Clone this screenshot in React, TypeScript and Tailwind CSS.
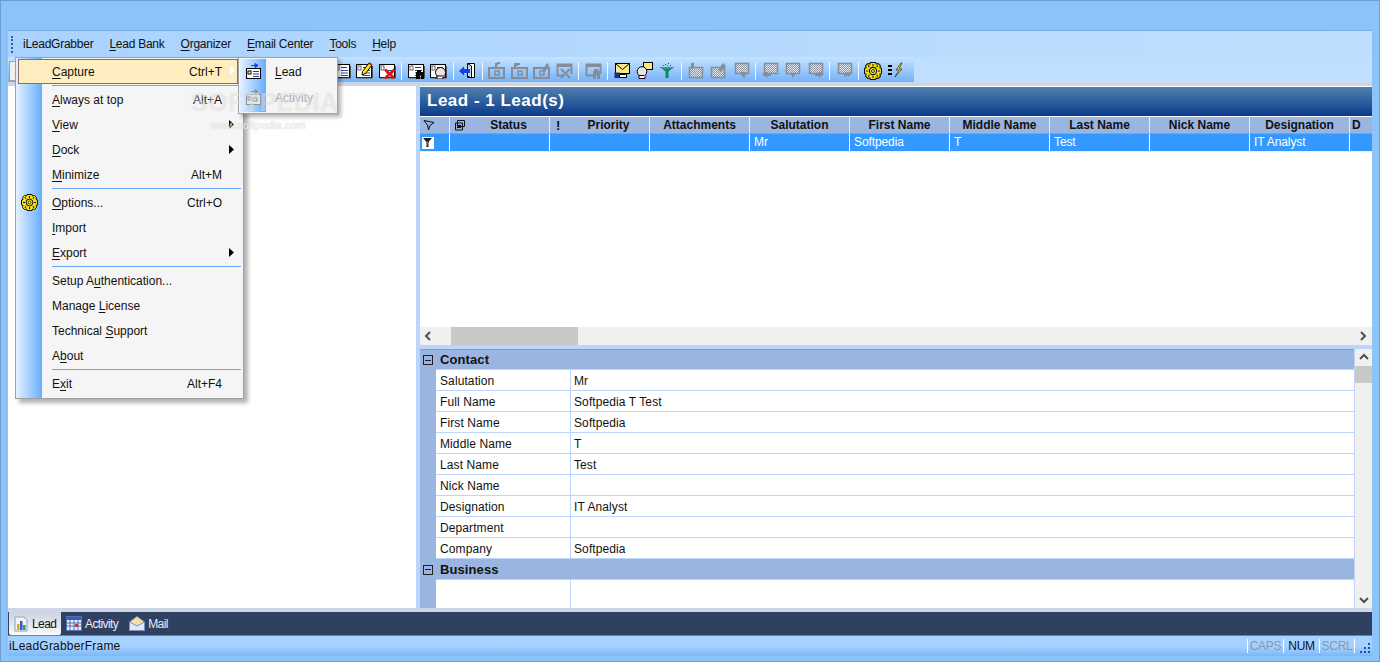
import React from "react";

const font = { fontFamily: '"Liberation Sans", Arial, sans-serif' };

type Ov = "none" | "list" | "pen" | "x" | "man" | "query";

const G = "#868d98";

function Dither() {
  return (
    <defs>
      <pattern id="dith" width="2" height="2" patternUnits="userSpaceOnUse">
        <rect width="2" height="2" fill="#8d949f" />
        <rect width="1" height="1" fill="#dfe8f2" />
        <rect x="1" y="1" width="1" height="1" fill="#dfe8f2" />
      </pattern>
    </defs>
  );
}

function Card({ ov = "none", gray = false, w = 17 }: { ov?: Ov; gray?: boolean; w?: number }) {
  const c = gray ? G : "#000";
  return (
    <svg width={w} height="17" viewBox="0 0 17 17">
      <rect x="0.5" y="2.5" width="15" height="13" fill={gray ? "#c5d5e6" : "#fff"} stroke={c} />
      <path d="M1 16h15.500V4" fill="none" stroke={gray ? G : "#555"} />
      <rect x="2" y="4" width="3" height="4" fill="#fff" stroke={gray ? G : "#666"} />
      {ov !== "x" && <path d="M7 5.500h6" stroke={gray ? G : "#1a3f8f"} />}
      <path d="M7 8.500h7M7 11h7M7 13.500h7" stroke={gray ? G : "#2b4f9f"} />
      {ov === "pen" && (
        <>
          <path d="M6 13 L6.500 9.500 L13 1 L16 3 L9.500 11.500 Z" fill="#ffe600" stroke="#000" />
          <path d="M13 1 L16 3" stroke="#d02020" strokeWidth="2" />
        </>
      )}
      {ov === "x" && <path d="M6 7.500 L15.500 16.500 M15.500 7.500 L6 16.500" stroke="#e80f0f" strokeWidth="2.600" />}
      {ov === "man" && <path d="M9 8h4v2h3v7h-3v-4h-1v4H8v-7h1z" fill={c} />}
      {ov === "query" && (
        <>
          <circle cx="10.500" cy="10.500" r="5" fill="#e6e6e6" stroke="#000" />
          <path d="M7 14h6v3H7z" fill="#fff" stroke="#000" />
          <rect x="12" y="13" width="3" height="2" fill="#c060b0" />
        </>
      )}
    </svg>
  );
}

function Gear({ size = 17 }: { size?: number }) {
  return (
    <svg width={size} height={size} viewBox="0 0 17 17">
      <path
        d="M6 .5h5l.5 1.500 2-.5 2 2-.5 2L16.500 6v5l-1.500.5.5 2-2 2-2-.5-.5 1.500H6l-.5-1.500-2 .5-2-2 .5-2L.5 11V6L2 5.500l-.5-2 2-2 2 .5z"
        fill="#f2e01c"
        stroke="#111"
      />
      <path d="M4 3l1 2M13 3l-1 2M2 8.500h2M13 8.500h2M4 14l1-2M13 14l-1-2M8.500 2v2M8.500 13v2" stroke="#111" />
      <circle cx="8.500" cy="8.500" r="3.400" fill="#f2e01c" stroke="#111" />
      <circle cx="8.500" cy="8.500" r="1.400" fill="#fff8a0" stroke="#111" strokeWidth="0.800" />
    </svg>
  );
}

function Exit() {
  return (
    <svg width="17" height="17" viewBox="0 0 17 17">
      <path d="M8.500 1.500h7v14h-7z" fill="#fff" stroke="#000" />
      <path d="M8.500 1.500l4 2.500v12l-4-2z" fill="#cfd6e4" stroke="#000" />
      <path d="M0 9l5-4.500V7h6v4H5v2.500z" fill="#1040e0" />
    </svg>
  );
}

function Env() {
  return (
    <svg width="17" height="17" viewBox="0 0 17 17">
      <rect x="1.500" y="1.500" width="14" height="10" fill="#f5e98a" stroke="#000" />
      <path d="M1.500 1.500 L8.500 7.500 L15.500 1.500" fill="none" stroke="#000" />
      <rect x="0.500" y="10.500" width="5" height="5.500" fill="#1a2f8f" />
      <path d="M5.500 12.500h7v3h-7z" fill="#fff" stroke="#000" />
    </svg>
  );
}

function EnvQuery() {
  return (
    <svg width="17" height="17" viewBox="0 0 17 17">
      <rect x="7.500" y="0.500" width="9" height="7" fill="#f5e98a" stroke="#000" />
      <circle cx="6" cy="9.500" r="4.800" fill="#e6e6e6" stroke="#000" />
      <path d="M3 13.500h6v3H3z" fill="#fff" stroke="#000" />
      <rect x="8" y="13" width="3" height="2" fill="#c060b0" />
    </svg>
  );
}

function Filt() {
  return (
    <svg width="17" height="17" viewBox="0 0 17 17">
      <path d="M1 5h14L9.500 9.500V16h-3V9.500z" fill="#0b8a5a" />
      <path d="M1 5h14l-2 2H3z" fill="#2ca07a" />
      <path d="M6 2h1v1H6zM9 1h1v1H9zM11 3h1v1h-1z" fill="#1040e0" />
      <path d="M4 3h1v1H4zM8 3h1v1H8z" fill="#e02020" />
    </svg>
  );
}

function GrayBox({ k }: { k: number }) {
  return (
    <svg width="17" height="17" viewBox="0 0 17 17">
      <rect x="1" y="6" width="15" height="10" fill="none" stroke={G} strokeWidth="2" />
      <rect x="7" y="9" width="4" height="4" fill="none" stroke={G} strokeWidth="1.500" />
      {k === 0 && <path d="M8 6V2h2M9 1h3" fill="none" stroke={G} strokeWidth="2" />}
      {k === 1 && <path d="M4 6V3h3M3 2h6" fill="none" stroke={G} strokeWidth="2" />}
      {k === 2 && <path d="M9 9L14 1l2 2-4 7z" fill={G} />}
    </svg>
  );
}

function GrayWin({ man = false }: { man?: boolean }) {
  return (
    <svg width="17" height="17" viewBox="0 0 17 17">
      <path d="M15.500 12V2.500H1.500v11H8" fill="none" stroke={G} strokeWidth="2" />
      <path d="M1 4h15" stroke={G} strokeWidth="2" />
      {man ? (
        <path d="M9 7h4v2h2v8h-3v-4h-1v4H8V9h1z" fill={G} />
      ) : (
        <path d="M5 7l9 9M14 7l-9 9" stroke={G} strokeWidth="2" />
      )}
    </svg>
  );
}

function GrayTray({ k }: { k: number }) {
  return (
    <svg width="17" height="17" viewBox="0 0 17 17">
      <Dither />
      <rect x="1.500" y="5.500" width="13" height="10" fill="url(#dith)" stroke={G} strokeWidth="1.500" />
      {k === 0 && <path d="M3 1h3v6H3z" fill={G} />}
      {k === 1 && <path d="M8 8L13 1l3 3-5 6z" fill={G} />}
    </svg>
  );
}

function GrayBubble({ dir }: { dir: number }) {
  return (
    <svg width="17" height="17" viewBox="0 0 17 17">
      <Dither />
      <rect x="2.500" y="1.500" width="13" height="10" fill="url(#dith)" stroke={G} strokeWidth="1.500" />
      {dir === 0 && <path d="M0 12l5-3v2h4v3H5v2z" fill={G} />}
      {dir === 1 && <path d="M6 11h6l-3 5z" fill={G} />}
      {dir === 2 && <path d="M17 12l-5-3v2H8v3h4v2z" fill={G} />}
      {dir === 3 && <path d="M8 10h5l-1 6-2-2-1 2z" fill={G} />}
      {dir === 4 && <path d="M8 11l7-1-2 5-2-2-2 3z" fill={G} />}
    </svg>
  );
}

function Bolt() {
  return (
    <svg width="17" height="17" viewBox="0 0 17 17">
      <path d="M1 4h4M1 8h4M1 12h4" stroke="#000" strokeWidth="2.200" />
      <path d="M14 1L9 8h3L8 15l7-8h-3l3-6z" fill="#ffe600" stroke="#222" strokeWidth="0.700" />
    </svg>
  );
}

function Funnel({ filled = false }: { filled?: boolean }) {
  return (
    <svg width="12" height="12" viewBox="0 0 12 12">
      {filled ? (
        <>
          <path d="M1 1h9L6.500 5V10h-2V5z" fill="#1a1a10" />
          <path d="M5 4h1v5H5z" fill="#1c7a2a" />
        </>
      ) : (
        <path d="M1 1.500 L11 3.500 L7 6.500 L5.500 11 L4.500 6z" fill="none" stroke="#111" />
      )}
    </svg>
  );
}

const Sep = () => (
  <div className="w-[6.5px] flex justify-center">
    <div className="w-[1px] h-[18px] bg-[#eef6ff]" />
  </div>
);
const B = ({ children }: { children: React.ReactNode }) => (
  <div className="w-[22.5px] h-[22px] flex items-center justify-center shrink-0">{children}</div>
);

function Toolbar() {
  return (
    <div className="h-[25px] flex">
      <div className="w-[906px] h-full flex items-center pt-[2px] bg-gradient-to-b from-[#c6e3ff] to-[#74b2f8]">
        <div className="w-[8px] h-[20px] ml-[1px] mr-[313.75px] bg-[#f0f0f0] border border-[#a0a0a0]" />
        <B><Card /></B>
        <B><Card ov="pen" /></B>
        <B><Card ov="x" /></B>
        <Sep />
        <B><Card ov="man" /></B>
        <B><Card ov="query" /></B>
        <Sep />
        <B><Exit /></B>
        <Sep />
        <B><GrayBox k={0} /></B>
        <B><GrayBox k={1} /></B>
        <B><GrayBox k={2} /></B>
        <B><GrayWin /></B>
        <Sep />
        <B><GrayWin man /></B>
        <Sep />
        <B><Env /></B>
        <B><EnvQuery /></B>
        <B><Filt /></B>
        <Sep />
        <B><GrayTray k={0} /></B>
        <B><GrayTray k={1} /></B>
        <B><GrayBubble dir={3} /></B>
        <Sep />
        <B><GrayBubble dir={0} /></B>
        <B><GrayBubble dir={1} /></B>
        <B><GrayBubble dir={2} /></B>
        <Sep />
        <B><GrayBubble dir={4} /></B>
        <Sep />
        <B><Gear size={18} /></B>
        <B><Bolt /></B>
      </div>
      <div className="flex-1 bg-[#bfdfff]" />
    </div>
  );
}

const U = ({ children }: { children: React.ReactNode }) => <span className="underline underline-offset-2">{children}</span>;

function MenuBar() {
  const items: [string, string][] = [
    ["", "iLeadGrabber"],
    ["L", "ead Bank"],
    ["O", "rganizer"],
    ["E", "mail Center"],
    ["T", "ools"],
    ["H", "elp"],
  ];
  return (
    <div className="h-[26px] flex items-center bg-gradient-to-r from-[#a9d3fe] to-[#bfdfff] text-[12px] text-[#111]">
      <div className="w-[2px] h-[17px] ml-[3px] mr-[10px] border-l-2 border-dotted border-[#2a62b0]" />
      <div className="flex gap-[16px]">
        {items.map(([u, r], i) => (
          <span key={i} className="tracking-[-0.25px]">
            {u && <U>{u}</U>}
            {r}
          </span>
        ))}
      </div>
    </div>
  );
}

function Row({ pre = "", u = "", post = "", sc = "", arrow = "", icon, active = false }: { pre?: string; u?: string; post?: string; sc?: string; arrow?: string; icon?: React.ReactNode; active?: boolean }) {
  return (
    <div className={active ? "h-[25px] flex items-center relative border border-[#8b6a70] bg-[#feeebf] ml-[2px] mr-[5px]" : "h-[25px] flex items-center relative whitespace-nowrap"}>
      <div className={active ? "w-[24px] shrink-0 flex justify-center" : "w-[26px] shrink-0 flex justify-center"}>{icon}</div>
      <div className={active ? "ml-[9px] flex-1" : "ml-[10px] flex-1"}>
        {pre}
        {u && <U>{u}</U>}
        {post}
      </div>
      {sc && <div className={active ? "text-right mr-[15px]" : "text-right mr-[21px]"}>{sc}</div>}
      {arrow && <Arrow color={arrow} />}
    </div>
  );
}

const Arrow = ({ color }: { color: string }) => (
  <svg width="5" height="9" viewBox="0 0 5 9" className={color === "white" ? "absolute right-[2px] top-[6px]" : "absolute right-[9px] top-[8px]"}>
    <path d="M0 0l5 4.500L0 9z" fill={color} />
  </svg>
);

const MSep = () => (
  <div className="h-[3px] flex items-center pl-[36px] pr-[2px]">
    <div className="h-[1px] w-full bg-[#66a8fb]" />
  </div>
);

function Menu() {
  return (
    <div className="absolute left-[14px] top-[56px] w-[229px] h-[342px] border border-[#a0a0a0] bg-[#f5f5f5] shadow-[4px_4px_4px_rgba(0,0,0,0.3)] text-[12px] text-[#111]">
      <div className="absolute left-0 top-0 bottom-0 w-[26px] bg-gradient-to-r from-[#e4f1ff] to-[#68acfc]" />
      <div className="relative pt-[1px]">
        <Row u="C" post="apture" sc="Ctrl+T" arrow="white" active />
        <MSep />
        <Row u="A" post="lways at top" sc="Alt+A" />
        <Row u="V" post="iew" arrow="black" />
        <Row u="D" post="ock" arrow="black" />
        <Row u="M" post="inimize" sc="Alt+M" />
        <MSep />
        <Row u="O" post="ptions..." sc="Ctrl+O" icon={<Gear />} />
        <Row u="I" post="mport" />
        <Row u="E" post="xport" arrow="black" />
        <MSep />
        <Row pre="Setup A" u="u" post="thentication..." />
        <Row pre="Manage " u="L" post="icense" />
        <Row pre="Technical " u="S" post="upport" />
        <Row pre="A" u="b" post="out" />
        <MSep />
        <Row pre="E" u="x" post="it" sc="Alt+F4" />
      </div>
    </div>
  );
}

function SubIcon({ gray = false }: { gray?: boolean }) {
  const c = gray ? "#8f9590" : "#000";
  return (
    <svg width="17" height="17" viewBox="0 0 17 17">
      <rect x="1.500" y="5.500" width="14" height="10" fill={gray ? "#e0e8f0" : "#fff"} stroke={c} />
      <rect x="3" y="8" width="3" height="3" fill="none" stroke={c} />
      {!gray && <path d="M8 8.500h6M8 11h6M8 13.500h6" stroke="#1a3f8f" />}
      {gray && <rect x="8" y="9" width="4" height="3" fill="none" stroke={c} />}
      <path d="M6 2.500h4M10 0.500l3 2-3 2z" fill={gray ? c : "#1040e0"} stroke={gray ? c : "#1040e0"} />
    </svg>
  );
}

function SubMenu() {
  return (
    <div className="absolute left-[237px] top-[56px] w-[100px] h-[57px] border border-[#a0a0a0] bg-[#f5f5f5] shadow-[3px_3px_4px_rgba(0,0,0,0.3)] text-[12px] flex">
      <div className="w-[26px] h-[53px] mt-[1px] ml-[1px] bg-gradient-to-r from-[#e4f1ff] to-[#68acfc] flex flex-col items-center pt-[4px] gap-[9px]">
        <SubIcon />
        <SubIcon gray />
      </div>
      <div className="pl-[9px] flex flex-col">
        <div className="h-[27px] flex items-center text-[#111]">
          <span><U>L</U>ead</span>
        </div>
        <div className="h-[26px] flex items-center text-[#a8a8a8]">
          Activity
        </div>
      </div>
    </div>
  );
}

function Watermark() {
  return (
    <div className="absolute left-[190px] top-[88px] w-[150px] pointer-events-none select-none whitespace-nowrap">
      <div className="text-[25px] leading-[26px] tracking-[0.5px] font-bold text-white/35 [text-shadow:0_0_1px_rgba(150,150,150,0.25)]">SOFTPEDIA</div>
      <div className="text-[11px] leading-[12px] mt-[4px] ml-[20px] text-white/80 [text-shadow:0_0_1px_rgba(120,120,120,0.5)]">www.softpedia.com</div>
    </div>
  );
}

const cols = ["Status", "Priority", "Attachments", "Salutation", "First Name", "Middle Name", "Last Name", "Nick Name", "Designation"];
const vals = ["", "", "", "Mr", "Softpedia", "T", "Test", "", "IT Analyst"];

function Grid() {
  return (
    <div className="h-[211px] bg-white overflow-hidden">
      <div className="h-[18px] flex bg-[#9ab5e0] border-t border-white border-b border-b-[#a0a0a0] text-[12px] font-bold text-[#111]">
        <div className="w-[30px] shrink-0 border-r border-[#e4ebf6] flex items-center pl-[3px]"><Funnel /></div>
        {cols.map((c, i) => (
          <div key={c} className={i < 2 ? "w-[100px] shrink-0 border-r border-[#e4ebf6] flex items-center justify-center relative leading-none pl-[18px]" : "w-[100px] shrink-0 border-r border-[#e4ebf6] flex items-center justify-center relative leading-none"}>
            {i === 0 && (
              <svg width="13" height="13" viewBox="0 0 13 13" className="absolute left-[3px] top-[2px]">
                <path d="M4.500 1.500h7v6h-7zM2.500 4h7v7h-7z" fill="none" stroke="#111" />
                <path d="M4 6.500h4M4 8.500h4" stroke="#111" />
              </svg>
            )}
            {i === 1 && <span className="absolute left-[6px] top-[2px] text-[13px]">!</span>}
            {c}
          </div>
        ))}
        <div className="w-[30px] flex items-center pl-[2px]">D</div>
      </div>
      <div className="h-[18px] flex bg-[#3399ff] border-b border-[#e8eef8] text-[12px] text-white tracking-[-0.1px]">
        <div className="w-[30px] shrink-0 border-r border-white flex items-center pl-[2px]">
          <div className="w-[12px] h-[12px] bg-white flex items-center justify-center">
            <Funnel filled />
          </div>
        </div>
        {vals.map((v, i) => (
          <div key={i} className="w-[100px] shrink-0 border-r border-white flex items-center pl-[4px] pb-[2px] leading-none">{v}</div>
        ))}
      </div>
    </div>
  );
}

function Chevron({ d }: { d: "l" | "r" | "u" | "d" }) {
  const p = { l: "M6 1L2 5l4 4", r: "M3 1l4 4-4 4", u: "M1 6l4-4 4 4", d: "M1 3l4 4 4-4" }[d];
  return (
    <svg width="10" height="10" viewBox="0 0 10 10">
      <path d={p} fill="none" stroke="#505050" strokeWidth="2" />
    </svg>
  );
}

const props: [string, string][] = [
  ["Salutation", "Mr"],
  ["Full Name", "Softpedia T Test"],
  ["First Name", "Softpedia"],
  ["Middle Name", "T"],
  ["Last Name", "Test"],
  ["Nick Name", ""],
  ["Designation", "IT Analyst"],
  ["Department", ""],
  ["Company", "Softpedia"],
];

const Minus = () => (
  <div className="w-[10px] h-[10px] border border-[#222] flex items-center justify-center">
    <div className="w-[6px] h-[1px] bg-[#222]" />
  </div>
);

function PropGrid() {
  return (
    <div className="flex-1 flex bg-white min-h-0 text-[12px] text-[#111] tracking-[0.1px]">
      <div className="flex-1 flex min-w-0">
        <div className="w-[16px] bg-[#9ab5e0] border-t border-[#8c9ab0] flex flex-col items-center">
          <div className="h-[20px] flex items-center"><Minus /></div>
          <div className="h-[189px]" />
          <div className="h-[21px] flex items-center"><Minus /></div>
        </div>
        <div className="flex-1 flex flex-col min-w-0">
          <div className="h-[21px] bg-[#9ab5e0] border-t border-[#8c9ab0] border-b border-b-[#bdd4fb] pl-[4px] font-bold text-[13px] leading-[20px]">Contact</div>
          {props.map(([k, v]) => (
            <div key={k} className="h-[21px] flex border-b border-[#bdd4fb]">
              <div className="w-[135px] border-r border-[#bdd4fb] pl-[4px] leading-[22px]">{k}</div>
              <div className="pl-[3px] leading-[22px]">{v}</div>
            </div>
          ))}
          <div className="h-[21px] bg-[#9ab5e0] border-b border-[#bdd4fb] pl-[4px] font-bold text-[13px] leading-[21px]">Business</div>
          <div className="flex-1 flex">
            <div className="w-[135px] border-r border-[#bdd4fb]" />
          </div>
        </div>
      </div>
      <div className="w-[18px] bg-[#f0f0f0] border-l border-[#bdd4fb] flex flex-col items-center">
        <div className="h-[17px] flex items-center"><Chevron d="u" /></div>
        <div className="w-full h-[17px] bg-[#c8c8c8]" />
        <div className="flex-1" />
        <div className="h-[17px] flex items-center"><Chevron d="d" /></div>
      </div>
    </div>
  );
}

function Tabs() {
  return (
    <div className="h-[28px] flex flex-col">
      <div className="h-[4px] bg-[#ccd6e6]" />
      <div className="h-[24px] bg-[#2f4060] border-b border-[#6f7f98] flex text-[12px] tracking-[-0.6px] items-center">
        <div className="h-[23px] w-[52px] ml-[1px] flex items-center gap-[4px] pl-[5px] text-[#111] bg-gradient-to-b from-[#ccd3e0] to-[#f8f9fb] rounded-b-[2px]">
          <svg width="14" height="16" viewBox="0 0 14 16">
            <path d="M1 1h9l3 3v11H1z" fill="#f4f4f4" stroke="#8fa0bc" />
            <rect x="3" y="8" width="2.500" height="6" fill="#f0a020" />
            <rect x="6" y="5" width="2.500" height="9" fill="#2060d0" />
            <rect x="9" y="9" width="2.500" height="5" fill="#30a040" />
          </svg>
          Lead
        </div>
        <div className="flex items-center gap-[3px] ml-[5px] text-[#e4ecf8]">
          <svg width="16" height="15" viewBox="0 0 16 15">
            <rect x="0.500" y="0.500" width="15" height="14" fill="#e8eef8" stroke="#5070b0" />
            <rect x="1" y="1" width="14" height="3" fill="#3060c0" />
            <path d="M1 7h14M1 10h14M4 4v10M8 4v10M12 4v10" stroke="#5070b0" />
            <rect x="9" y="8" width="3" height="3" fill="#e03020" />
          </svg>
          Activity
        </div>
        <div className="flex items-center gap-[3px] ml-[11px] text-[#e4ecf8]">
          <svg width="16" height="15" viewBox="0 0 16 15">
            <path d="M0.500 6 L8 0.500 L15.500 6 V14.500 H0.500z" fill="#f4dfa0" stroke="#8a98b8" />
            <path d="M0.500 6 L8 10 L15.500 6 V14.500 H0.500z" fill="#dfe8f6" stroke="#7a90c0" />
          </svg>
          Mail
        </div>
      </div>
    </div>
  );
}

function StatusBar() {
  return (
    <div className="h-[20px] flex items-center bg-gradient-to-b from-[#a6d2ff] via-[#a6d2ff] to-[#7db7f5] text-[12px] text-[#111]">
      <div className="flex-1 pl-[1px] tracking-[0.2px]">iLeadGrabberFrame</div>
      <div className="w-[36px] border-l border-white text-center text-[#8a97a8] h-[14px] leading-[14px] tracking-[-0.3px]">CAPS</div>
      <div className="w-[36px] border-l border-white text-center h-[14px] leading-[14px] text-[#0a1030] tracking-[-0.3px]">NUM</div>
      <div className="w-[35px] border-l border-white text-center text-[#8a97a8] h-[14px] leading-[14px] tracking-[-0.3px]">SCRL</div>
      <div className="w-[18px] h-[14px] border-l border-white flex justify-end items-end pr-[1px]">
        <svg width="11" height="11" viewBox="0 0 11 11">
          <path d="M8 1h2v2H8zM4 5h2v2H4zM8 5h2v2H8zM0 9h2v2H0zM4 9h2v2H4zM8 9h2v2H8z" fill="#1a4fb0" />
        </svg>
      </div>
    </div>
  );
}

export default function App() {
  return (
    <div style={font} className="relative w-[1380px] h-[662px] bg-[#8cc4fa] border border-[#6f9fd0] overflow-hidden">
      <div className="ml-[7px] mr-[7px] mt-[29px] w-[1364px] h-[626px] flex flex-col">
        <div className="border-t border-[#79acdf]">
          <MenuBar />
          <Toolbar />
        </div>
        <div className="h-[4px] bg-[#ccd6e6]" />
        <div className="h-[522px] flex">
          <div className="w-[408px] bg-white" />
          <div className="w-[4px] bg-[#bdd4fb]" />
          <div className="flex-1 flex flex-col min-w-0 overflow-hidden">
            <div className="h-[30px] border-t border-white bg-gradient-to-b from-[#5080ae] to-[#0b3a8c] text-white font-bold text-[17px] pl-[7px] leading-[27px] tracking-[0.5px]">
              Lead - 1 Lead(s)
            </div>
            <Grid />
            <div className="h-[18px] bg-[#f0f0f0] flex items-center justify-between">
              <div className="w-[31px] flex pl-[4px]"><Chevron d="l" /></div>
              <div className="w-[127px] h-full bg-[#c8c8c8]" />
              <div className="flex-1" />
              <div className="w-[18px] flex justify-center"><Chevron d="r" /></div>
            </div>
            <div className="h-[4px] bg-[#bdd4fb]" />
            <PropGrid />
          </div>
        </div>
        <Tabs />
        <StatusBar />
      </div>
      <Menu />
      <SubMenu />
      <Watermark />
    </div>
  );
}
